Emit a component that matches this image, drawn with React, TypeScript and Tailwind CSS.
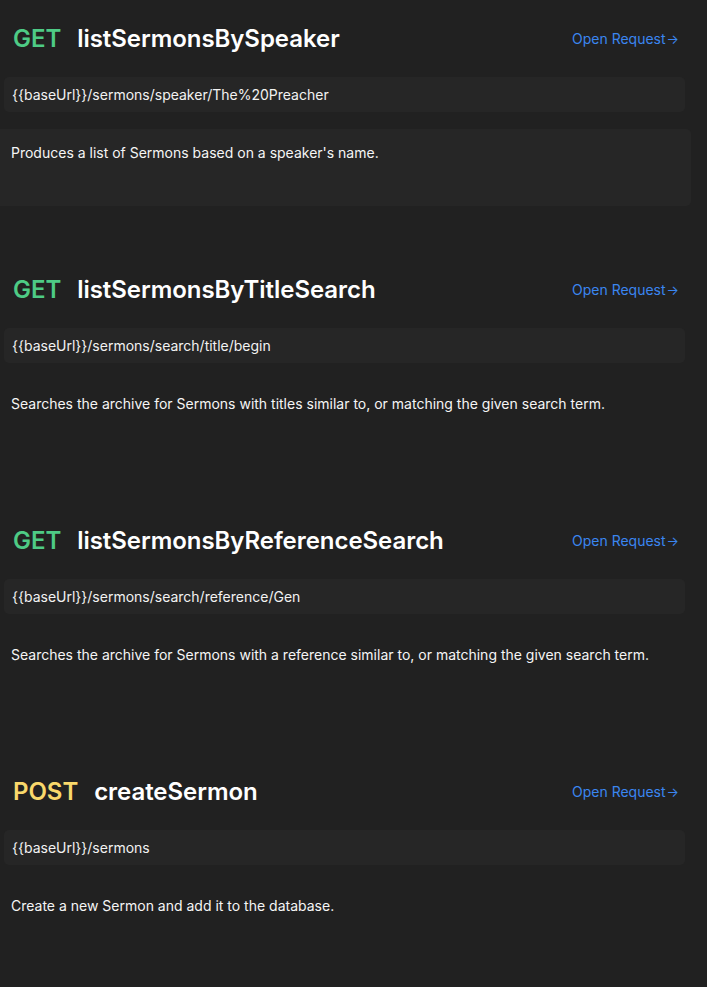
import React from "react";

type Item = {
  method: "GET" | "POST";
  name: string;
  url: string;
  desc: string;
  active?: boolean;
};

const items: Item[] = [
  {
    method: "GET",
    name: "listSermonsBySpeaker",
    url: "{{baseUrl}}/sermons/speaker/The%20Preacher",
    desc: "Produces a list of Sermons based on a speaker's name.",
    active: true,
  },
  {
    method: "GET",
    name: "listSermonsByTitleSearch",
    url: "{{baseUrl}}/sermons/search/title/begin",
    desc: "Searches the archive for Sermons with titles similar to, or matching the given search term.",
  },
  {
    method: "GET",
    name: "listSermonsByReferenceSearch",
    url: "{{baseUrl}}/sermons/search/reference/Gen",
    desc: "Searches the archive for Sermons with a reference similar to, or matching the given search term.",
  },
  {
    method: "POST",
    name: "createSermon",
    url: "{{baseUrl}}/sermons",
    desc: "Create a new Sermon and add it to the database.",
  },
];

export default function App() {
  return (
    <div
      className="min-h-screen w-full bg-[#212121] text-white"
      style={{ fontFamily: "Inter, 'Noto Sans', sans-serif" }}
    >
      {items.map((it) => (
        <section key={it.name} className="h-[251px] pt-[23px]">
          <div className="flex h-8 items-center justify-between pl-[13px] pr-[28px]">
            <h2 className="flex items-center gap-4 text-[24px] font-semibold leading-8 tracking-[-0.05px]">
              <span className={it.method === "GET" ? "text-[#4ecb85]" : "text-[#f9d86b]"}>
                {it.method}
              </span>
              <span className="text-white">{it.name}</span>
            </h2>
            <a className="flex items-center text-[14px] leading-5 text-[#3b86f0]">
              Open Request
              <span className="ml-[1px] text-[13px]">→</span>
            </a>
          </div>
          <div className="ml-1 mt-[22px] flex h-[35px] w-[681px] items-center rounded-[5px] bg-[#262626] pl-2 text-[14px] text-[#f2f2f2]">
            {it.url}
          </div>
          <div
            className={
              "mt-[17px] h-[77px] w-[691px] rounded-r-[5px] pl-[11px] pt-[14px] text-[14px] leading-5 text-[#f5f5f5] " +
              (it.active ? "bg-[#262626]" : "")
            }
          >
            {it.desc}
          </div>
        </section>
      ))}
    </div>
  );
}
